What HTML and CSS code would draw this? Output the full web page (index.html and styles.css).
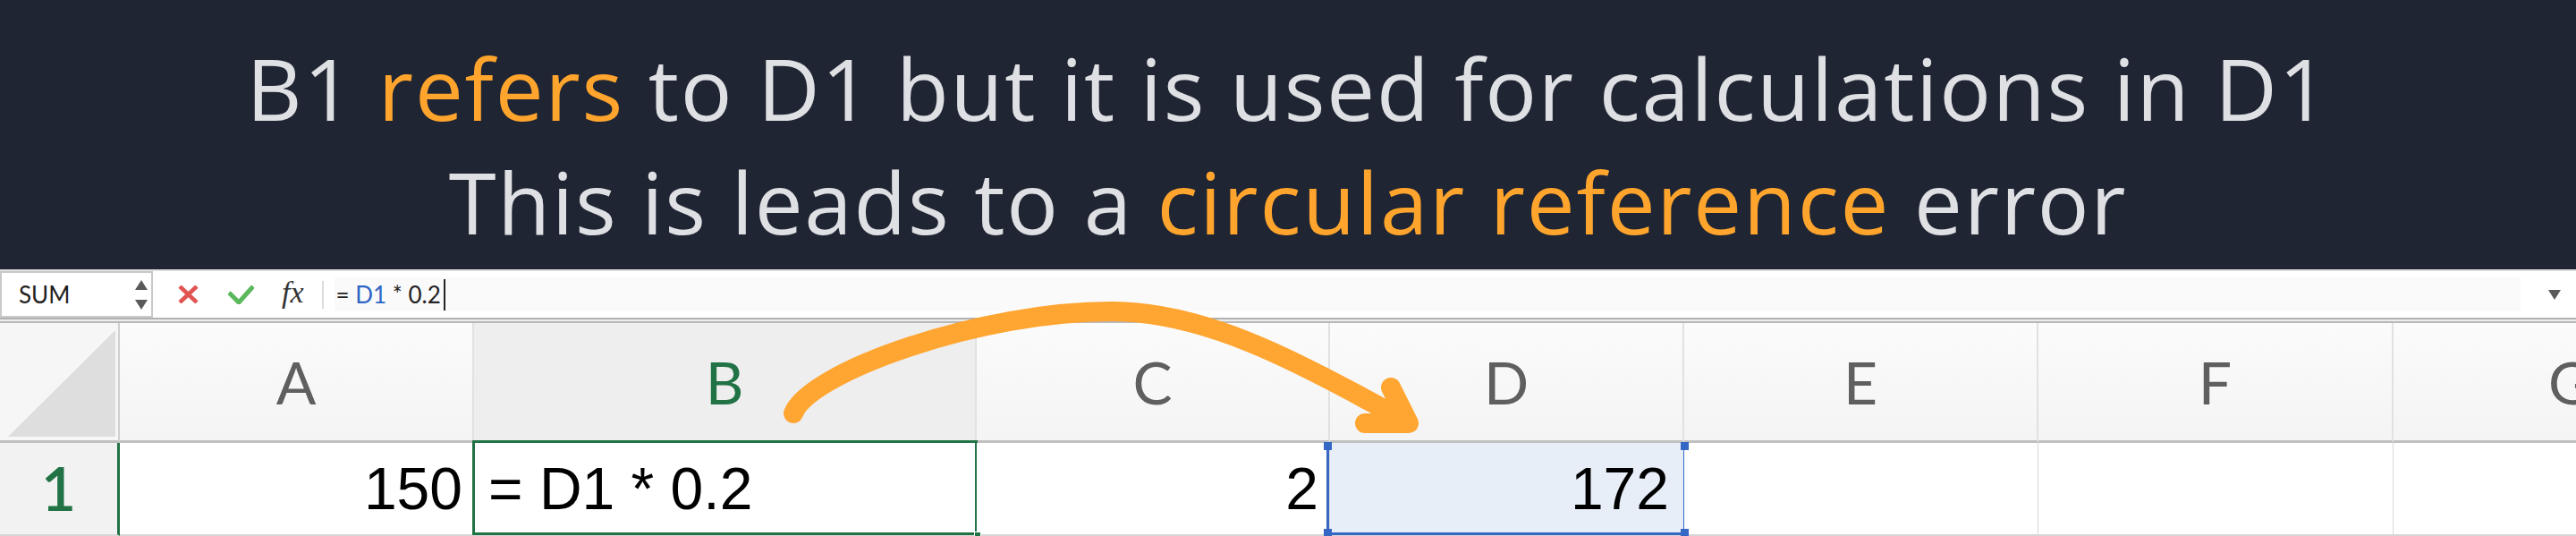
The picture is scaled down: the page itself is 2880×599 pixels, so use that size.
FILE: index.html
```html
<!DOCTYPE html>
<html lang="en">
<head>
<meta charset="utf-8">
<title>Circular reference</title>
<link rel="stylesheet" href="styles.css">
</head>
<body>
<div class="page">
  <header class="banner">
    <p class="line">B1 <span class="hl">refers</span> to D1 but it is used for calculations in D1</p>
    <p class="line">This is leads to a <span class="hl">circular reference</span> error</p>
  </header>

  <div class="fbar">
    <div class="namebox">
      <span class="name">SUM</span>
      <span class="spin"><i class="tri up"></i><i class="tri down"></i></span>
    </div>
    <svg class="ic ic-x" viewBox="0 0 23 20" width="23" height="20"><path d="M2 1 L21 19 M21 1 L2 19"/></svg>
    <svg class="ic ic-ok" viewBox="0 0 29 21" width="29" height="21"><path d="M1 8 L12 19 L28 1"/></svg>
    <span class="fx">fx</span>
    <span class="sep"></span>
    <div class="input"><span class="op">= </span><span class="refname">D1</span><span class="op"> * 0.2</span><span class="caret"></span></div>
    <div class="expand"><i class="tri down"></i></div>
  </div>

  <div class="split"></div>

  <div class="sheet">
    <div class="corner"><span class="corner-tri"></span></div>
    <div class="colhead">A</div>
    <div class="colhead active">B</div>
    <div class="colhead">C</div>
    <div class="colhead">D</div>
    <div class="colhead">E</div>
    <div class="colhead">F</div>
    <div class="colhead">G</div>

    <div class="rowhead">1</div>
    <div class="cell num"><span class="val">150</span></div>
    <div class="cell txt active"><span class="val">= D1 * 0.2</span><span class="handle"></span></div>
    <div class="cell num"><span class="val">2</span></div>
    <div class="cell num ref"><span class="val">172</span><i class="dot tl"></i><i class="dot tr"></i><i class="dot bl"></i><i class="dot br"></i></div>
    <div class="cell"></div>
    <div class="cell"></div>
    <div class="cell"></div>
  </div>

  <svg class="arrow" viewBox="0 0 2880 599" width="2880" height="599">
    <path d="M887 462 C905 415 1100 347 1245 348 C1345 349 1445 400 1563 466"/>
    <path d="M1555 433 L1575 473 L1526 473"/>
  </svg>
</div>
</body>
</html>
```

FILE: styles.css
```css
* { box-sizing: border-box; }

html, body {
  margin: 0;
  padding: 0;
  background: #ffffff;
}

.page {
  position: relative;
  width: 2880px;
  height: 599px;
  overflow: hidden;
  background: #ffffff;
}

/* ---------- title banner ---------- */
.banner {
  height: 301px;
  padding-top: 34px;
  background: #1f2532;
  text-align: center;
}

.line {
  margin: 0;
  font-family: "Open Sans", "Noto Sans", sans-serif;
  font-weight: 400;
  font-size: 96px;
  line-height: 127px;
  letter-spacing: 1.8px;
  color: #dfe0e4;
  white-space: nowrap;
}

.hl { color: #ffa52d; }

/* ---------- formula bar ---------- */
.fbar {
  display: flex;
  align-items: center;
  height: 54px;
  border-top: 2px solid #dedede;
  background: #ffffff;
}

.namebox {
  display: flex;
  align-items: center;
  justify-content: space-between;
  width: 171px;
  height: 52px;
  padding: 0 4px 0 19px;
  border: 2px solid #c9c9c9;
  background: #ffffff;
}

.name {
  font-family: Lato, "Liberation Sans", sans-serif;
  font-size: 26px;
  color: #222222;
}

.spin {
  display: flex;
  flex-direction: column;
  gap: 11px;
}

.tri {
  display: block;
  width: 0;
  height: 0;
  border-left: 7px solid transparent;
  border-right: 7px solid transparent;
}
.tri.up { border-bottom: 11px solid #595959; }
.tri.down { border-top: 11px solid #595959; }

.ic {
  flex: none;
  fill: none;
}
.ic-x {
  margin-left: 28px;
  stroke: #e05552;
  stroke-width: 4.6;
}
.ic-ok {
  margin-left: 33px;
  stroke: #5cb85c;
  stroke-width: 5;
}

.fx {
  margin-left: 31px;
  font-family: "Liberation Serif", serif;
  font-style: italic;
  font-size: 34px;
  line-height: 1;
  color: #333333;
  padding-bottom: 4px;
}

.sep {
  width: 2px;
  height: 31px;
  margin-left: 20px;
  background: #dddddd;
}

.input {
  flex: 1;
  display: flex;
  align-items: center;
  height: 38px;
  margin-left: 12px;
  padding-left: 2px;
  background: #fafafa;
  font-family: Lato, "Liberation Sans", sans-serif;
  font-size: 26px;
  color: #222222;
  white-space: pre;
}

.refname { color: #2f66c6; }

.caret {
  width: 2px;
  height: 35px;
  margin-left: 3px;
  background: #222222;
}

.expand {
  width: 62px;
  display: flex;
  justify-content: center;
  padding-left: 14px;
}

.split {
  height: 6px;
  border-top: 2px solid #b1b1b1;
  border-bottom: 2px solid #b8b8b8;
  background: #ececec;
}

/* ---------- sheet ---------- */
.sheet {
  display: grid;
  grid-template-columns: 134px 396px 562px 395px 396px 396px 397px 396px;
  grid-template-rows: 134px 104px;
  width: 3072px;
}

.corner {
  position: relative;
  background: #f6f6f6;
  border-right: 2px solid #cfcfcf;
  border-bottom: 3px solid #c0c0c0;
}

.corner-tri {
  position: absolute;
  left: 9px;
  top: 8px;
  width: 120px;
  height: 119px;
  background: #dedede;
  clip-path: polygon(0 100%, 100% 0, 100% 100%);
}

.colhead {
  display: flex;
  align-items: center;
  justify-content: center;
  background: linear-gradient(#fbfbfb, #f4f4f4);
  border-right: 2px solid #e1e1e1;
  border-bottom: 3px solid #c0c0c0;
  font-family: Lato, "Liberation Sans", sans-serif;
  font-size: 66px;
  color: #5f5f5f;
}

.colhead.active {
  background: #eeeeee;
  color: #217346;
}

.rowhead {
  display: flex;
  align-items: center;
  justify-content: center;
  padding-bottom: 4px;
  background: #f2f2f2;
  border-right: 3px solid #217346;
  border-bottom: 2px solid #d6d6d6;
  font-family: Lato, "Liberation Sans", sans-serif;
  font-weight: 600;
  font-size: 68px;
  color: #217346;
}

.cell {
  position: relative;
  display: flex;
  align-items: center;
  background: #ffffff;
  border-right: 1px solid #d8d8d8;
  border-bottom: 2px solid #d6d6d6;
  font-family: "Liberation Sans", Arial, sans-serif;
  font-size: 66px;
  color: #000000;
  white-space: pre;
}

.cell.num {
  justify-content: flex-end;
  padding-right: 12px;
}

.cell.txt {
  padding-left: 16px;
}

.cell.active::after {
  content: "";
  position: absolute;
  top: -3px;
  bottom: -1px;
  left: -2px;
  right: -2px;
  border: 3px solid #217346;
}

.handle {
  position: absolute;
  right: -6px;
  bottom: -5px;
  width: 8px;
  height: 8px;
  background: #217346;
  border: 1px solid #ffffff;
  z-index: 2;
}

.cell.ref {
  background: #e8eef8;
  padding-right: 16px;
}

.cell.ref::after {
  content: "";
  position: absolute;
  top: 0;
  bottom: -1px;
  left: -4px;
  right: -3px;
  border: 3px solid #3567c5;
  border-top: none;
}

.dot {
  position: absolute;
  width: 9px;
  height: 9px;
  background: #3567c5;
  z-index: 2;
}
.dot.tl { left: -7px; top: -1px; }
.dot.tr { right: -6px; top: -1px; }
.dot.bl { left: -7px; bottom: -3px; }
.dot.br { right: -6px; bottom: -3px; }

.val { display: inline-block; }

/* ---------- arrow overlay ---------- */
.arrow {
  position: absolute;
  left: 0;
  top: 0;
  pointer-events: none;
  fill: none;
  stroke: #ffa531;
  stroke-width: 22;
  stroke-linecap: round;
  stroke-linejoin: round;
}
```
